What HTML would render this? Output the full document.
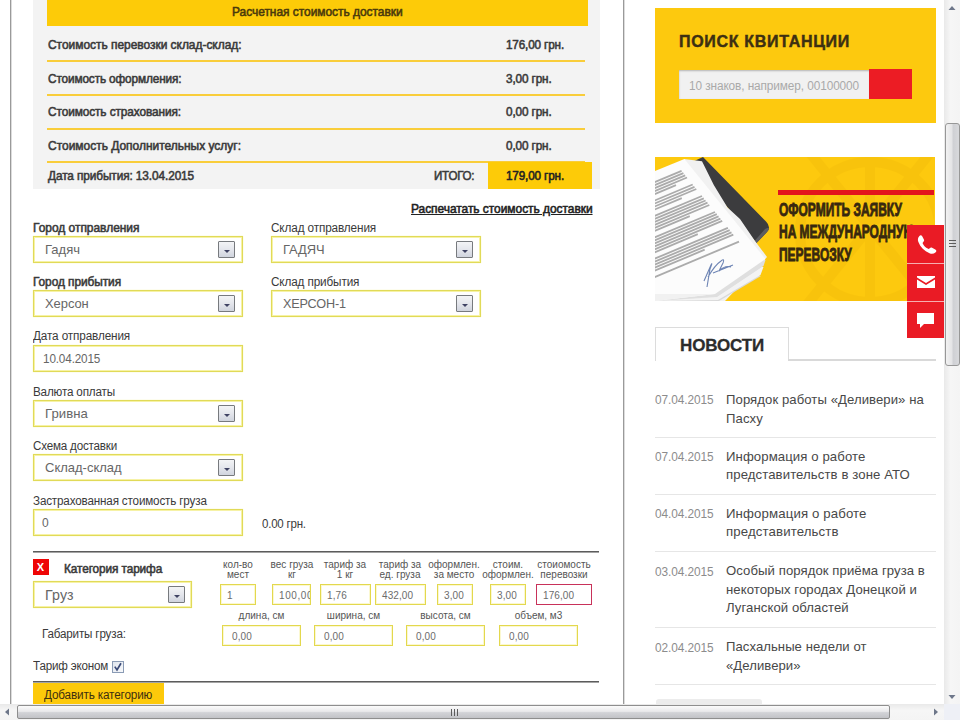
<!DOCTYPE html>
<html lang="ru">
<head>
<meta charset="utf-8">
<title>Расчет стоимости доставки</title>
<style>
*{box-sizing:border-box;margin:0;padding:0}
html,body{width:960px;height:720px;overflow:hidden;background:#fff}
body{position:relative;font-family:"Liberation Sans",sans-serif;font-size:12px;color:#3a3a3a}
.abs{position:absolute}
.t{position:absolute;white-space:nowrap;line-height:14px}
.b{font-weight:normal;-webkit-text-stroke:.55px currentColor}
/* left column */
#vline1{left:10px;top:0;width:2px;height:704px;background:linear-gradient(90deg,#9a9a9a 50%,#dcdcdc 50%)}
#vline2{left:623px;top:0;width:2px;height:704px;background:linear-gradient(90deg,#9a9a9a 50%,#dcdcdc 50%)}
#panel{left:33px;top:0;width:567px;height:189px;background:#f3f3f3}
#phead{left:47px;top:0;width:541px;height:26px;background:#fdcb08}
.yl{position:absolute;left:47px;width:538px;height:2px;background:#f9cd3a}
#total{left:488px;top:162px;width:104px;height:27px;background:#fdcb08}
.fld{position:absolute;height:27px;border:1px solid #e1da58;background:#fff;box-shadow:inset 0 0 0 1px #f6f2a6,0 0 1px #f3efa0}
.fld span{position:absolute;left:11px;top:5px;font-size:13px;line-height:15px;color:#666;white-space:nowrap}
.dd{position:absolute;width:17px;height:17px;border:1px solid #777a7e;border-radius:1px;background:linear-gradient(#f3f4f6,#e4e6ec 50%,#d0d4de)}
.dd:after{content:"";position:absolute;left:4.5px;top:7.5px;border:3px solid transparent;border-top:3.5px solid #3f4263;border-bottom:0}
.sm{position:absolute;height:21px;border:1px solid #e3d84e;background:#fff;box-shadow:inset 0 0 0 1px #fbf8d0}
.sm span{position:absolute;top:5px;font-size:10px;line-height:12px;letter-spacing:.1px;color:#6c6c6c;white-space:nowrap}
.hl{position:absolute;font-size:10px;line-height:10px;color:#555;text-align:center;white-space:nowrap}
.gl{position:absolute;left:33px;width:566px;height:2px;background:linear-gradient(#5c5c5c 50%,#a4a4a4 50%)}

/* sidebar */
#sbox{left:655px;top:8px;width:281px;height:115px;background:#fdc90e}
#stitle{left:679px;top:32px;font-size:16px;line-height:20px;font-weight:bold;color:#3d3012;-webkit-text-stroke:.45px #3d3012}
#sinput{left:679px;top:70px;width:191px;height:29px;background:#f1f1f1;box-shadow:inset 0 1px 2px rgba(0,0,0,.25)}
#sbtn{left:869px;top:69px;width:43px;height:30px;background:#ec1c24}
#sph{left:689px;top:79px;color:#a9a9a9}
#banner{left:655px;top:157px;width:280px;height:144px;background:#fdc90e;overflow:hidden}
.bt{position:absolute;left:124px;font-size:19px;line-height:20px;font-weight:bold;color:#38280f;white-space:nowrap;transform-origin:0 0;transform:scaleX(.63);-webkit-text-stroke:.9px #38280f}
.rb{position:absolute;left:907px;width:37px;height:37px;background:#ea1b25}
#ntab{left:655px;top:327px;width:134px;height:34px;border:1px solid #dcdcdc;border-bottom:0;background:#fff}
#nline{left:788px;top:359px;width:148px;height:2px;background:#d9d9d9}
#ntitle{left:680px;top:336px;font-size:17px;line-height:20px;font-weight:bold;color:#2c2c2c;-webkit-text-stroke:.3px #2c2c2c}
.nd{position:absolute;left:655px;color:#8c8c8c;white-space:nowrap;line-height:14px}
.nt{position:absolute;left:726px;font-size:13px;line-height:18.5px;color:#484848;white-space:nowrap}
.ns{position:absolute;left:655px;width:281px;height:1px;background:#e6e6e6}
/* scrollbars */
#vsb{left:944px;top:0;width:16px;height:704px;background:linear-gradient(90deg,#e9e9e9,#f6f6f6 40%,#f4f4f4)}
#vth{left:945px;top:123px;width:15px;height:243px;border:1px solid #979797;border-radius:3px;background:linear-gradient(90deg,#f2f2f2,#e4e4e6 45%,#cfd0d4 55%,#d8d9dc)}
#hsb{left:0;top:704px;width:944px;height:16px;background:linear-gradient(#e9e9e9,#f6f6f6 40%,#f4f4f4)}
#hth{left:17px;top:705px;width:873px;height:14px;border:1px solid #8e8e8e;border-radius:2px;background:linear-gradient(#fbfbfb,#e9e9eb 45%,#d2d3d7 55%,#c2c3c7)}
#corner{left:944px;top:704px;width:16px;height:16px;background:#eef0f6}
</style>
<style id="fit">
#h1{transform:scaleX(0.996);transform-origin:0 0;letter-spacing:-0.03px}
#r1{transform:scaleX(0.996);transform-origin:0 0;letter-spacing:-0.02px}
#r2{transform:scaleX(0.982);transform-origin:0 0;letter-spacing:-0.12px}
#r3{transform:scaleX(0.986);transform-origin:0 0;letter-spacing:-0.09px}
#r4{transform:scaleX(0.998);transform-origin:0 0;letter-spacing:-0.01px}
#r5{transform:scaleX(0.984);transform-origin:0 0;letter-spacing:-0.09px}
#v1{transform:scaleX(0.975);transform-origin:0 0;letter-spacing:-0.14px}
#v2{transform:scaleX(0.978);transform-origin:0 0;letter-spacing:-0.12px}
#v3{transform:scaleX(0.978);transform-origin:0 0;letter-spacing:-0.12px}
#v4{transform:scaleX(0.978);transform-origin:0 0;letter-spacing:-0.12px}
#v5{transform:scaleX(0.975);transform-origin:0 0;letter-spacing:-0.14px}
#itogo{transform:scaleX(0.965);transform-origin:0 0;letter-spacing:-0.25px}
#print{transform:scaleX(0.995);transform-origin:0 0;letter-spacing:-0.03px}
#l1{transform:scaleX(0.997);transform-origin:0 0;letter-spacing:-0.02px}
#l2{transform:scaleX(0.980);transform-origin:0 0;letter-spacing:-0.13px}
#l3{transform:scaleX(0.990);transform-origin:0 0;letter-spacing:-0.07px}
#l4{transform:scaleX(0.979);transform-origin:0 0;letter-spacing:-0.14px}
#l5{transform:scaleX(0.979);transform-origin:0 0;letter-spacing:-0.13px}
#l6{transform:scaleX(0.974);transform-origin:0 0;letter-spacing:-0.18px}
#l7{transform:scaleX(0.969);transform-origin:0 0;letter-spacing:-0.20px}
#l8{transform:scaleX(0.972);transform-origin:0 0;letter-spacing:-0.17px}
#l9{transform:scaleX(0.958);transform-origin:0 0;letter-spacing:-0.22px}
#f1{transform:scaleX(1.001);transform-origin:0 0;letter-spacing:0.01px}
#f2{transform:scaleX(0.992);transform-origin:0 0;letter-spacing:-0.06px}
#f3{transform:scaleX(0.995);transform-origin:0 0;letter-spacing:-0.04px}
#f4{transform:scaleX(0.975);transform-origin:0 0;letter-spacing:-0.21px}
#f5{transform:scaleX(0.976);transform-origin:0 0;letter-spacing:-0.14px}
#f6{transform:scaleX(1.010);transform-origin:0 0;letter-spacing:0.07px}
#f7{transform:scaleX(0.999);transform-origin:0 0;letter-spacing:-0.00px}
#f9{transform:scaleX(1.016);transform-origin:0 0;letter-spacing:0.11px}
#cat{transform:scaleX(0.984);transform-origin:0 0;letter-spacing:-0.10px}
#addcat{transform:scaleX(0.977);transform-origin:0 0;letter-spacing:-0.15px}
#gab{transform:scaleX(0.970);transform-origin:0 0;letter-spacing:-0.18px}
#econ{transform:scaleX(0.970);transform-origin:0 0;letter-spacing:-0.20px}
#stitle{letter-spacing:0.69px}
#sph{transform:scaleX(0.984);transform-origin:0 0;letter-spacing:-0.09px}
#ntitle{letter-spacing:-0.15px}
#n1{transform:scaleX(1.010);transform-origin:0 0;letter-spacing:0.07px}
#n2{transform:scaleX(1.013);transform-origin:0 0;letter-spacing:0.09px}
#n3{transform:scaleX(1.017);transform-origin:0 0;letter-spacing:0.12px}
#n4{transform:scaleX(1.011);transform-origin:0 0;letter-spacing:0.07px}
#n5{transform:scaleX(1.008);transform-origin:0 0;letter-spacing:0.06px}
#d1{transform:scaleX(0.987);transform-origin:0 0;letter-spacing:-0.08px}
#d2{transform:scaleX(0.987);transform-origin:0 0;letter-spacing:-0.08px}
#d3{transform:scaleX(0.987);transform-origin:0 0;letter-spacing:-0.08px}
#d4{transform:scaleX(0.987);transform-origin:0 0;letter-spacing:-0.08px}
#d5{transform:scaleX(0.987);transform-origin:0 0;letter-spacing:-0.08px}
</style>
</head>
<body>
<!-- frame lines -->
<div class="abs" id="vline1"></div>
<div class="abs" id="vline2"></div>

<!-- cost panel -->
<div class="abs" id="panel"></div>
<div class="abs" id="phead"></div>
<div class="t b" style="left:232px;top:5px;color:#4a3a0c" id="h1">Расчетная стоимость доставки</div>
<div class="yl" style="top:60px"></div>
<div class="yl" style="top:94px"></div>
<div class="yl" style="top:128px"></div>
<div class="yl" style="top:161px"></div>
<div class="abs" id="total"></div>
<div class="t b" style="left:48px;top:38px" id="r1">Стоимость перевозки склад-склад:</div>
<div class="t b" style="left:48px;top:72px" id="r2">Стоимость оформления:</div>
<div class="t b" style="left:48px;top:105px" id="r3">Стоимость страхования:</div>
<div class="t b" style="left:48px;top:139px" id="r4">Стоимость Дополнительных услуг:</div>
<div class="t b" style="left:48px;top:169px" id="r5">Дата прибытия: 13.04.2015</div>
<div class="t b" style="left:506px;top:38px" id="v1">176,00 грн.</div>
<div class="t b" style="left:506px;top:72px" id="v2">3,00 грн.</div>
<div class="t b" style="left:506px;top:105px" id="v3">0,00 грн.</div>
<div class="t b" style="left:506px;top:139px" id="v4">0,00 грн.</div>
<div class="t b" style="left:434px;top:169px" id="itogo">ИТОГО:</div>
<div class="t b" style="left:506px;top:169px;color:#222" id="v5">179,00 грн.</div>
<div class="t b" style="left:411px;top:202px;color:#222;text-decoration:underline" id="print">Распечатать стоимость доставки</div>

<!-- form labels -->
<div class="t b" style="left:33px;top:221px" id="l1">Город отправления</div>
<div class="t" style="left:271px;top:221px" id="l2">Склад отправления</div>
<div class="t b" style="left:33px;top:275px" id="l3">Город прибытия</div>
<div class="t" style="left:271px;top:275px" id="l4">Склад прибытия</div>
<div class="t" style="left:33px;top:329px" id="l5">Дата отправления</div>
<div class="t" style="left:33px;top:385px" id="l6">Валюта оплаты</div>
<div class="t" style="left:33px;top:439px" id="l7">Схема доставки</div>
<div class="t" style="left:33px;top:494px" id="l8">Застрахованная стоимость груза</div>
<div class="t" style="left:262px;top:517px" id="l9">0.00 грн.</div>

<!-- form fields -->
<div class="fld" style="left:33px;top:236px;width:210px"><span id="f1">Гадяч</span><i class="dd" style="left:184px;top:4px"></i></div>
<div class="fld" style="left:271px;top:236px;width:210px"><span id="f2">ГАДЯЧ</span><i class="dd" style="left:184px;top:4px"></i></div>
<div class="fld" style="left:33px;top:290px;width:210px"><span id="f3">Херсон</span><i class="dd" style="left:184px;top:4px"></i></div>
<div class="fld" style="left:271px;top:290px;width:210px"><span id="f4">ХЕРСОН-1</span><i class="dd" style="left:184px;top:4px"></i></div>
<div class="fld" style="left:33px;top:345px;width:210px"><span id="f5" style="left:9px;top:6px;font-size:12px">10.04.2015</span></div>
<div class="fld" style="left:33px;top:400px;width:210px"><span id="f6">Гривна</span><i class="dd" style="left:184px;top:4px"></i></div>
<div class="fld" style="left:33px;top:454px;width:210px"><span id="f7">Склад-склад</span><i class="dd" style="left:184px;top:4px"></i></div>
<div class="fld" style="left:33px;top:509px;width:210px"><span id="f8" style="left:8px;top:6px;font-size:12px">0</span></div>

<!-- tariff block -->
<div class="gl" style="top:551px"></div>
<div class="abs" style="left:33px;top:559px;width:16px;height:16px;background:#ee0505;color:#fff;font-size:11px;font-weight:bold;line-height:16px;text-align:center;padding-right:1px">X</div>
<div class="t b" style="left:64px;top:562px" id="cat">Категория тарифа</div>
<div class="fld" style="left:33px;top:581px;width:159px"><span id="f9" style="font-size:14px;top:5px;line-height:16px">Груз</span><i class="dd" style="left:134px;top:4px"></i></div>

<div class="hl" style="left:208px;top:560px;width:60px" id="h_a">кол-во<br>мест</div>
<div class="hl" style="left:262px;top:560px;width:60px" id="h_b">вес груза<br>кг</div>
<div class="hl" style="left:315px;top:560px;width:60px" id="h_c">тариф за<br>1 кг</div>
<div class="hl" style="left:370px;top:560px;width:60px" id="h_d">тариф за<br>ед. груза</div>
<div class="hl" style="left:424px;top:560px;width:60px" id="h_e">оформлен.<br>за место</div>
<div class="hl" style="left:478px;top:560px;width:60px" id="h_f">стоим.<br>оформлен.</div>
<div class="hl" style="left:534px;top:560px;width:60px" id="h_g">стоиомость<br>перевозки</div>

<div class="sm" style="left:220px;top:584px;width:36px"><span style="left:6px">1</span></div>
<div class="sm" style="left:272px;top:584px;width:39px;overflow:hidden"><span style="left:6px;letter-spacing:.6px">100,00</span></div>
<div class="sm" style="left:320px;top:584px;width:51px"><span style="left:6px">1,76</span></div>
<div class="sm" style="left:375px;top:584px;width:51px"><span style="left:6px">432,00</span></div>
<div class="sm" style="left:437px;top:584px;width:36px"><span style="left:6px">3,00</span></div>
<div class="sm" style="left:490px;top:584px;width:36px"><span style="left:6px">3,00</span></div>
<div class="sm" style="left:536px;top:584px;width:56px;border-color:#c8325a;box-shadow:none"><span style="left:6px">176,00</span></div>

<div class="hl" style="left:222px;top:611px;width:79px" id="h_h">длина, см</div>
<div class="hl" style="left:314px;top:611px;width:79px" id="h_i">ширина, см</div>
<div class="hl" style="left:406px;top:611px;width:79px" id="h_j">высота, см</div>
<div class="hl" style="left:499px;top:611px;width:79px" id="h_k">объем, м3</div>
<div class="sm" style="left:222px;top:625px;width:79px"><span style="left:9px">0,00</span></div>
<div class="sm" style="left:314px;top:625px;width:79px"><span style="left:9px">0,00</span></div>
<div class="sm" style="left:406px;top:625px;width:79px"><span style="left:9px">0,00</span></div>
<div class="sm" style="left:499px;top:625px;width:79px"><span style="left:9px">0,00</span></div>

<div class="t" style="left:42px;top:627px" id="gab">Габариты груза:</div>
<div class="t" style="left:33px;top:659px" id="econ">Тариф эконом</div>
<div class="abs" style="left:112px;top:661px;width:12px;height:12px;border:1px solid #8a9bb5;background:linear-gradient(135deg,#dfe5ee,#f8f9fb)"><svg width="10" height="10" viewBox="0 0 10 10" style="position:absolute;left:0;top:0"><path d="M1.8 4.6 L4 8 L8 1.2" fill="none" stroke="#3a4a78" stroke-width="1.7"/></svg></div>
<div class="gl" style="top:681px"></div>
<div class="abs" style="left:33px;top:683px;width:131px;height:21px;background:#fdc90a"></div>
<div class="t" style="left:44px;top:688px;color:#3d2f10" id="addcat">Добавить категорию</div>

<!-- sidebar: search -->
<div class="abs" id="sbox"></div>
<div class="t" id="stitle">ПОИСК КВИТАНЦИИ</div>
<div class="abs" id="sinput"></div>
<div class="abs" id="sbtn"></div>
<div class="t" id="sph">10 знаков, например, 00100000</div>

<!-- sidebar: banner -->
<div class="abs" id="banner">
<svg width="279" height="144" viewBox="0 0 279 144" style="position:absolute;left:0;top:0">
  <g fill="none" stroke="#f0b90a" stroke-width="10" opacity=".35">
    <path d="M150 -10 L280 150 M280 -10 L150 150 M215 -10 L215 150"/>
    <circle cx="215" cy="75" r="70"/>
  </g>
  <!-- tablet -->
  <path d="M36 5.500 L48 0 L111 64.500 Q116.500 70 112 75 L101.500 86 Z" fill="#3c3c3e"/>
  <path d="M113.500 70.500 Q114.500 72.500 112 75 L101.500 86 L99.500 84 L110 72 Z" fill="#5d5d60"/>
  <!-- back sheet -->
  <path d="M29 2 L47 4.200 L58.800 28 L72.500 50.500 L85 62 L100 84 L112 100 L70 144 L20 144 Z" fill="#f1f1f1"/>
  <!-- stack -->
  <path d="M0 100 L106 119 L64 144 L0 144 Z" fill="#d9d9d9"/>
  <path d="M0 100 L108.500 110 L105.500 118 L63 143 L0 144 Z" fill="#f3f3f3"/>
  <path d="M0 100 L110.500 103 L108.500 109 L62 140 L0 144 Z" fill="#dfdfdf"/>
  <!-- front sheet -->
  <path d="M0 14 L29.400 2 L110.500 102 L60 137 L0 144 Z" fill="#fcfcfc"/>
  <path d="M0 137 L60 137 L0 144 Z" fill="#f1f1f1"/>
  <path d="M-1 25.4 L26.6 13.8 M-1 28.4 L28.4 16.1 M-1 31.4 L30.2 18.3 M-1 34.4 L32.0 20.5 M-1 37.4 L21.0 28.2 M-1 43.8 L37.7 27.5 M-1 46.8 L39.5 29.8 M-1 49.8 L41.3 32.0 M-1 52.8 L26.8 41.1 M-1 59.2 L47.0 39.0 M-1 62.2 L48.8 41.3 M-1 65.2 L50.6 43.5 M-1 68.2 L52.5 45.7 M-1 71.2 L54.3 48.0 M-1 74.2 L34.8 59.2 M-1 80.6 L60.0 55.0 M-1 83.6 L61.8 57.2 M-1 86.6 L63.6 59.4 M-1 89.6 L65.4 61.7 M-1 92.6 L67.2 63.9 M-1 95.6 L42.8 77.2 M-1 102.0 L72.9 70.9 M-1 105.0 L74.7 73.2 M-1 108.0 L76.5 75.4 M-1 111.0 L78.3 77.6 M-1 114.0 L49.7 92.7 M-1 120.4 L84.0 84.6" stroke="#8c8c8c" stroke-width="1.800" opacity=".72" fill="none"/>
  <path d="M49 124 L56 108 Q58 104 55 112 L52 130 M53 120 Q60 108 66 104 Q70 101 68 106 L64 114 Q70 108 76 110 M58 116 L78 108" fill="none" stroke="#6d84b4" stroke-width="1.100"/>
  <!-- red bar -->
  <rect x="123" y="33" width="156" height="5" fill="#e3141c"/>
</svg>
<div class="bt" style="top:42.5px">ОФОРМИТЬ ЗАЯВКУ</div>
<div class="bt" style="top:65px">НА МЕЖДУНАРОДНУЮ</div>
<div class="bt" style="top:88px">ПЕРЕВОЗКУ</div>
</div>

<!-- floating red buttons -->
<div class="abs" style="left:907px;top:225px;width:37px;height:113px;background:#f6aeb0"></div>
<div class="rb" style="top:225px;height:38px"><svg width="37" height="38" viewBox="0 0 37 38"><path d="M12.2 11.2c1-1.2 2.2-1.4 3 .1l1.700 3.200c.5 1 .2 1.700-.6 2.400-.8.700-.8 1.100-.3 2 1.100 2 2.700 3.600 4.700 4.700.9.500 1.300.5 2-.3.700-.8 1.400-1.100 2.400-.6l3.200 1.700c1.500.8 1.300 2 .1 3-1.600 1.400-3.600 1.700-5.900.8-5.200-2-9.100-5.900-11.100-11.100-.9-2.300-.6-4.300.8-5.900z" fill="#fff"/></svg></div>
<div class="rb" style="top:264px"><svg width="37" height="37" viewBox="0 0 37 37"><path d="M10 12h18v1.500l-9 5.500-9-5.500z M10 15.500l9 5.500 9-5.500v8.500h-18z" fill="#fff"/></svg></div>
<div class="rb" style="top:302px;height:36px"><svg width="37" height="36" viewBox="0 0 37 36"><path d="M10 11h17v11h-10l-4 4v-4h-3z" fill="#fff"/></svg></div>

<!-- news -->
<div class="abs" id="ntab"></div>
<div class="abs" id="nline"></div>
<div class="t" id="ntitle">НОВОСТИ</div>

<div class="nd" style="top:393px" id="d1">07.04.2015</div>
<div class="nt" style="top:391px" id="n1">Порядок работы «Деливери» на<br>Пасху</div>
<div class="ns" style="top:437px"></div>
<div class="nd" style="top:450px" id="d2">07.04.2015</div>
<div class="nt" style="top:447.5px" id="n2">Информация о работе<br>представительств в зоне АТО</div>
<div class="ns" style="top:494px"></div>
<div class="nd" style="top:507px" id="d3">04.04.2015</div>
<div class="nt" style="top:504.5px" id="n3">Информация о работе<br>представительств</div>
<div class="ns" style="top:551px"></div>
<div class="nd" style="top:565px" id="d4">03.04.2015</div>
<div class="nt" style="top:562px" id="n4">Особый порядок приёма груза в<br>некоторых городах Донецкой и<br>Луганской областей</div>
<div class="ns" style="top:627px"></div>
<div class="nd" style="top:641px" id="d5">02.04.2015</div>
<div class="nt" style="top:638px" id="n5">Пасхальные недели от<br>«Деливери»</div>
<div class="ns" style="top:684px"></div>
<div class="abs" style="left:656px;top:699px;width:106px;height:6px;background:#ececec;border-radius:3px 3px 0 0"></div>

<!-- scrollbars -->
<div class="abs" id="vsb"></div>
<div class="abs" id="vth"></div>
<svg class="abs" style="left:944px;top:0" width="16" height="704" viewBox="0 0 16 704">
  <path d="M4.500 10 L8 6 L11.500 10 Z" fill="#6e778a"/>
  <path d="M4.500 695 L8 699 L11.500 695 Z" fill="#6e778a"/>
  <path d="M5 240.500h7M5 243.500h7M5 246.500h7" stroke="#5d5d5d" stroke-width="1"/>
</svg>
<div class="abs" id="hsb"></div>
<div class="abs" id="hth"></div>
<svg class="abs" style="left:0;top:704px" width="944" height="16" viewBox="0 0 944 16">
  <path d="M9 4.500 L5 8 L9 11.500 Z" fill="#6e778a"/>
  <path d="M934 4.500 L938 8 L934 11.500 Z" fill="#6e778a"/>
  <path d="M451.500 5v7M454.500 5v7M457.500 5v7" stroke="#5d5d5d" stroke-width="1"/>
</svg>
<div class="abs" id="corner"></div>

</body>
</html>
